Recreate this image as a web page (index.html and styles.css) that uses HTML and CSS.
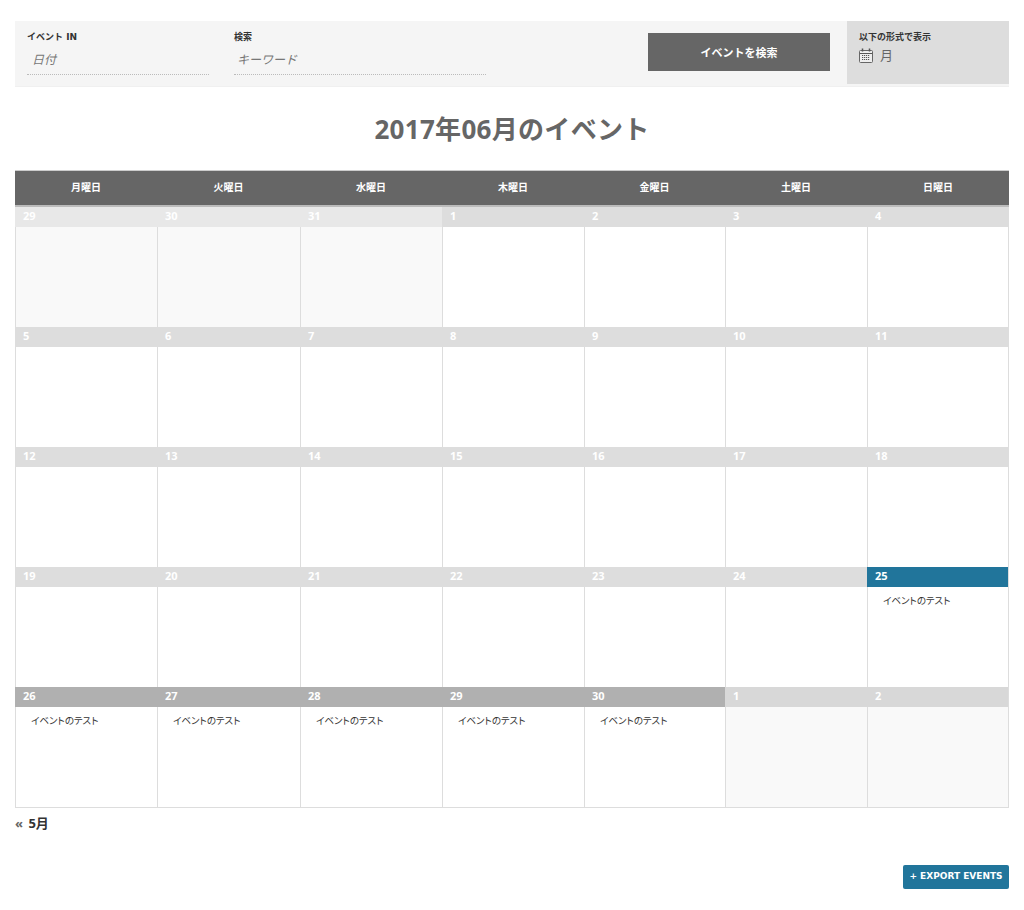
FILE: index.html
```html
<!DOCTYPE html>
<html lang="ja">
<head>
    <meta charset="UTF-8">
    <title>2017年06月のイベント</title>
    <link rel="stylesheet" href="styles.css">
</head>
<body>
    <div class="bar">
        <div class="field field-date">
            <label>イベント IN</label>
            <div class="field-value">日付</div>
        </div>
        <div class="field field-keyword">
            <label>検索</label>
            <div class="field-value">キーワード</div>
        </div>
        <button class="search-btn">イベントを検索</button>
        <div class="views">
            <label>以下の形式で表示</label>
            <div class="views-value">
                <svg class="cal-icon" width="14" height="15" viewBox="0 0 14 15">
                    <rect x="0.5" y="2.5" width="13" height="12" rx="1" fill="#eee" stroke="#666"/>
                    <path d="M1 5.5h12" stroke="#555"/>
                    <path d="M3.5 0.5v3M10.5 0.5v3" stroke="#555" stroke-width="1.5"/>
                    <path d="M3 7.5h8M3 9.5h8M3 11.5h8" stroke="#555" stroke-dasharray="1.2 .8"/>
                </svg>
                <span>月</span>
            </div>
        </div>
    </div>

    <h1 class="title">2017年06月のイベント</h1>

    <div class="cal-head">
        <div>月曜日</div>
        <div>火曜日</div>
        <div>水曜日</div>
        <div>木曜日</div>
        <div>金曜日</div>
        <div>土曜日</div>
        <div>日曜日</div>
    </div>

    <div class="cal">
        <div class="day prev"><div class="num">29</div></div>
        <div class="day prev"><div class="num">30</div></div>
        <div class="day prev"><div class="num">31</div></div>
        <div class="day"><div class="num">1</div></div>
        <div class="day"><div class="num">2</div></div>
        <div class="day"><div class="num">3</div></div>
        <div class="day"><div class="num">4</div></div>

        <div class="day"><div class="num">5</div></div>
        <div class="day"><div class="num">6</div></div>
        <div class="day"><div class="num">7</div></div>
        <div class="day"><div class="num">8</div></div>
        <div class="day"><div class="num">9</div></div>
        <div class="day"><div class="num">10</div></div>
        <div class="day"><div class="num">11</div></div>

        <div class="day"><div class="num">12</div></div>
        <div class="day"><div class="num">13</div></div>
        <div class="day"><div class="num">14</div></div>
        <div class="day"><div class="num">15</div></div>
        <div class="day"><div class="num">16</div></div>
        <div class="day"><div class="num">17</div></div>
        <div class="day"><div class="num">18</div></div>

        <div class="day"><div class="num">19</div></div>
        <div class="day"><div class="num">20</div></div>
        <div class="day"><div class="num">21</div></div>
        <div class="day"><div class="num">22</div></div>
        <div class="day"><div class="num">23</div></div>
        <div class="day"><div class="num">24</div></div>
        <div class="day today"><div class="num">25</div><div class="event">イベントのテスト</div></div>

        <div class="day has-event"><div class="num">26</div><div class="event">イベントのテスト</div></div>
        <div class="day has-event"><div class="num">27</div><div class="event">イベントのテスト</div></div>
        <div class="day has-event"><div class="num">28</div><div class="event">イベントのテスト</div></div>
        <div class="day has-event"><div class="num">29</div><div class="event">イベントのテスト</div></div>
        <div class="day has-event"><div class="num">30</div><div class="event">イベントのテスト</div></div>
        <div class="day next"><div class="num">1</div></div>
        <div class="day next"><div class="num">2</div></div>
    </div>

    <div class="prev-link"><span class="arrows">«</span> 5月</div>

    <div class="export">
        <a class="export-btn">+ EXPORT EVENTS</a>
    </div>
</body>
</html>
```

FILE: styles.css
```css
* {
    margin: 0;
    padding: 0;
    box-sizing: border-box;
}
body {
    font-family: "Open Sans", "Noto Sans CJK JP", sans-serif;
    background: #fff;
    color: #333;
    padding: 21px 15px 0;
}
.bar {
    display: flex;
    align-items: flex-start;
    height: 66px;
    background: #f5f5f5;
    border-bottom: 1px solid #f0f0f0;
}
label {
    display: block;
    font-family: "DejaVu Sans", "Noto Sans CJK JP", sans-serif;
    font-size: 9px;
    font-weight: 700;
    line-height: 12px;
    color: #333;
}
.field {
    padding-top: 10px;
}
.field-date {
    width: 182px;
    margin-left: 12px;
}
.field-keyword {
    width: 252px;
    margin-left: 25px;
}
.field-value {
    height: 32px;
    padding: 7px 0 0 5px;
    font-size: 12px;
    line-height: 20px;
    font-style: italic;
    color: #777;
    border-bottom: 1px dotted #bbb;
}
.field-keyword .field-value {
    padding-left: 3px;
}
.search-btn {
    width: 182px;
    height: 38px;
    margin: 12px 0 0 162px;
    background: #666;
    color: #fff;
    border: none;
    font-family: inherit;
    font-size: 11px;
    font-weight: 700;
}
.views {
    width: 162px;
    height: 63px;
    margin-left: 17px;
    padding: 10px 12px;
    background: #ddd;
}
.views-value {
    display: flex;
    align-items: center;
    gap: 7px;
    margin-top: 3px;
    font-size: 13px;
    line-height: 18px;
    color: #666;
}
.title {
    margin-top: 22px;
    font-size: 26px;
    line-height: 40px;
    font-weight: 700;
    letter-spacing: 0.3px;
    text-align: center;
    color: #666;
}
.cal-head {
    display: grid;
    grid-template-columns: 142px 143px 142px 142px 141px 142px 142px;
    height: 37px;
    margin-top: 21px;
    background: #666;
    border-top: 1px solid #ccc;
    border-bottom: 2px solid #bbb;
}
.cal-head div {
    font-size: 10px;
    font-weight: 700;
    line-height: 33px;
    text-align: center;
    color: #fff;
}
.cal {
    display: grid;
    grid-template-columns: 142px 143px 142px 142px 141px 142px 141px;
    border-right: 1px solid #ddd;
    border-bottom: 1px solid #ddd;
}
.day {
    height: 120px;
    border-left: 1px solid #ddd;
    background: #fff;
}
.num {
    height: 20px;
    padding-left: 8px;
    margin-left: -1px;
    font-size: 11px;
    font-weight: 700;
    line-height: 18px;
    color: #fff;
    background: #ddd;
}
.prev {
    background: #f9f9f9;
}
.prev .num {
    background: #e8e8e8;
}
.next {
    background: #f9f9f9;
}
.next .num {
    background: #d8d8d8;
}
.has-event .num {
    background: #b0b0b0;
}
.today .num {
    background: #21759b;
}
.event {
    padding: 6px 0 0 15px;
    font-size: 9.5px;
    line-height: 16px;
    font-feature-settings: "palt";
    color: #333;
}
.prev-link {
    margin-top: 6px;
    font-size: 13px;
    font-weight: 700;
    line-height: 18px;
    color: #333;
}
.arrows {
    color: #666;
    margin-right: 2px;
}
.export {
    display: flex;
    justify-content: flex-end;
    margin-top: 33px;
}
.export-btn {
    display: block;
    width: 106px;
    height: 24px;
    background: #21759b;
    border-radius: 2px;
    color: #fff;
    font-family: "DejaVu Sans", sans-serif;
    font-size: 9px;
    font-weight: 700;
    line-height: 22px;
    text-align: center;
    white-space: nowrap;
}
```
